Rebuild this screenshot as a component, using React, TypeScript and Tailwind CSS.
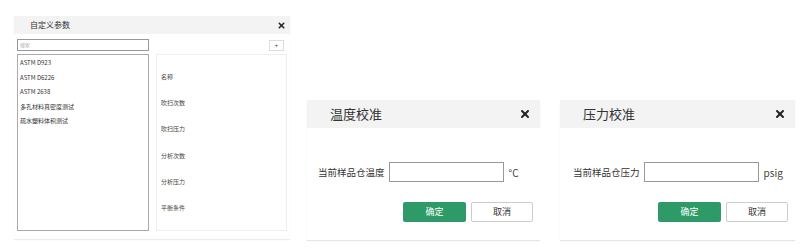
import { X } from "lucide-react";

const font = { fontFamily: '"Noto Sans CJK SC", "Liberation Sans", sans-serif' };

const items = ["ASTM D923", "ASTM D6226", "ASTM 2638", "多孔材料真密度测试", "疏水塑料体积测试"];
const fields = ["名称", "吹扫次数", "吹扫压力", "分析次数", "分析压力", "平衡条件"];

function CustomParams() {
  return (
    <div className="flex h-[223px] w-[276px] flex-col bg-white shadow-[0_1px_1px_rgba(0,0,0,0.08)]">
      <div className="flex h-[18px] items-center justify-between bg-[#f3f3f3] pl-[16px] pr-[4px]">
        <span className="text-[8px] text-[#333]">自定义参数</span>
        <X className="h-[9px] w-[9px] text-[#222]" strokeWidth={4} />
      </div>
      <div className="flex flex-1 flex-col px-[3px] pt-[5px]">
        <div className="flex items-center justify-between">
          <div className="flex h-[12px] w-[132px] items-center border border-[#999] px-[2px] text-[5px] text-[#aaa]">
            搜索
          </div>
          <div className="mr-[3px] flex h-[11px] w-[15px] items-center justify-center border border-[#ddd] text-[6px] text-[#444]">
            +
          </div>
        </div>
        <div className="mt-[3px] flex gap-[7px]">
          <div className="flex h-[177px] w-[132px] flex-col gap-[7.6px] border border-[#aaa] px-[2px] pt-[4px]">
            {items.map((t) => (
              <div key={t} className="h-[7px] text-[6px] leading-[7px] text-[#333]">
                {t}
              </div>
            ))}
          </div>
          <div className="flex h-[177px] w-[131px] flex-col gap-[19.2px] border border-[#eee] px-[4px] pt-[18px]">
            {fields.map((t) => (
              <div key={t} className="h-[7px] text-[6px] leading-[7px] text-[#444]">
                {t}
              </div>
            ))}
          </div>
        </div>
      </div>
    </div>
  );
}

function Calib({
  title,
  label,
  unit,
  width,
  pad,
}: {
  title: string;
  label: string;
  unit: string;
  width: string;
  pad: string;
}) {
  return (
    <div className={`flex h-[140px] flex-col bg-white shadow-[0_1px_1px_rgba(0,0,0,0.1)] ${width}`}>
      <div className="flex h-[28px] items-center justify-between bg-[#f3f3f3] pl-[23px] pr-[9px]">
        <span className="text-[13px] text-[#333]">{title}</span>
        <X className="h-[12px] w-[12px] text-[#222]" strokeWidth={4} />
      </div>
      <div className={`mt-[34px] flex items-center ${pad}`}>
        <span className="text-[9.5px] text-[#333]">{label}</span>
        <div className="ml-[4px] h-[20px] w-[115px] border border-[#999]" />
        <span className="ml-[5px] text-[10px] text-[#444]">{unit}</span>
      </div>
      <div className="mt-[20px] flex justify-end gap-[5px] pr-[7px]">
        <div className="flex h-[20px] w-[63px] items-center justify-center rounded-[2px] bg-[#2e9a68] text-[9px] text-white">
          确定
        </div>
        <div className="flex h-[20px] w-[62px] items-center justify-center rounded-[2px] border border-[#ccc] bg-white text-[9px] text-[#333]">
          取消
        </div>
      </div>
    </div>
  );
}

export default function App() {
  return (
    <div className="flex h-[251px] w-[800px] items-end bg-white pb-[11px] pl-[14px]" style={font}>
      <div className="mb-[1px]">
        <CustomParams />
      </div>
      <div className="ml-[17px]">
        <Calib title="温度校准" label="当前样品仓温度" unit="°C" width="w-[233px]" pad="pl-[11px]" />
      </div>
      <div className="ml-[20px]">
        <Calib title="压力校准" label="当前样品仓压力" unit="psig" width="w-[235px]" pad="pl-[13px]" />
      </div>
    </div>
  );
}
